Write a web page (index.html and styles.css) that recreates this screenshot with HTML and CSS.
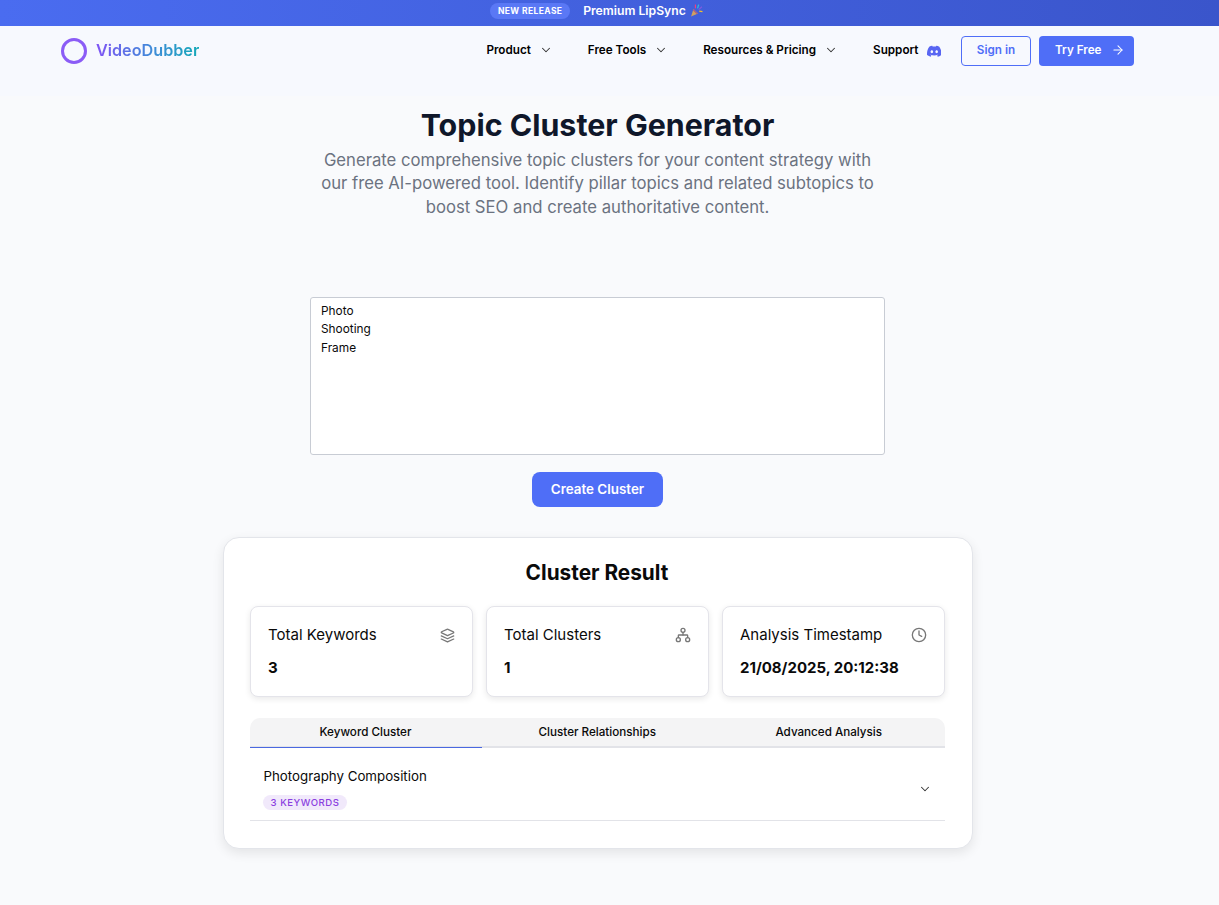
FILE: index.html
```html
<!DOCTYPE html>
<html lang="en">
<head>
<meta charset="utf-8">
<title>Topic Cluster Generator</title>
<link rel="stylesheet" href="styles.css">
</head>
<body>
<div class="topbar">
  <div class="topbar-inner">
    <span class="release">NEW RELEASE</span>
    <span class="promo">Premium LipSync</span>
    <svg class="popper" viewBox="0 0 12 12" aria-hidden="true">
      <path d="M1 11.5 3.2 4.6 7.4 8.8Z" fill="#d0a060"/>
      <path d="M3.2 4.6 7.4 8.8 6.2 9.3 2.8 5.9Z" fill="#a45a8c"/>
      <path d="M5 .5v3.5" stroke="#ef3f7f" stroke-width="1.1" fill="none"/>
      <path d="M8 .5 7 4" stroke="#2fc4d9" stroke-width="1.1" fill="none"/>
      <path d="M11 2.5 8 5.2" stroke="#7f5be0" stroke-width="1.1" fill="none"/>
      <path d="M11.5 7 8.5 6.6" stroke="#f2c02e" stroke-width="1.1" fill="none"/>
    </svg>
  </div>
</div>
<header class="nav">
  <a class="logo">
    <span class="logo-ring"></span>
    <span class="logo-text">VideoDubber</span>
  </a>
  <nav class="menu">
    <a class="menu-item">Product <svg class="chev" viewBox="0 0 24 24"><path d="m6 9 6 6 6-6"/></svg></a>
    <a class="menu-item">Free Tools <svg class="chev" viewBox="0 0 24 24"><path d="m6 9 6 6 6-6"/></svg></a>
    <a class="menu-item">Resources &amp; Pricing <svg class="chev" viewBox="0 0 24 24"><path d="m6 9 6 6 6-6"/></svg></a>
    <a class="menu-item">Support
      <svg class="discord" viewBox="0 0 24 24"><path d="M20.317 4.3698a19.7913 19.7913 0 00-4.8851-1.5152.0741.0741 0 00-.0785.0371c-.211.3753-.4447.8648-.6083 1.2495-1.8447-.2762-3.68-.2762-5.4868 0-.1636-.3933-.4058-.8742-.6177-1.2495a.077.077 0 00-.0785-.037 19.7363 19.7363 0 00-4.8852 1.515.0699.0699 0 00-.0321.0277C.5334 9.0458-.319 13.5799.0992 18.0578a.0824.0824 0 00.0312.0561c2.0528 1.5076 4.0413 2.4228 5.9929 3.0294a.0777.0777 0 00.0842-.0276c.4616-.6304.8731-1.2952 1.226-1.9942a.076.076 0 00-.0416-.1057c-.6528-.2476-1.2743-.5495-1.8722-.8923a.077.077 0 01-.0076-.1277c.1258-.0943.2517-.1923.3718-.2914a.0743.0743 0 01.0776-.0105c3.9278 1.7933 8.18 1.7933 12.0614 0a.0739.0739 0 01.0785.0095c.1202.099.246.1981.3728.2924a.077.077 0 01-.0066.1276 12.2986 12.2986 0 01-1.873.8914.0766.0766 0 00-.0407.1067c.3604.698.7719 1.3628 1.225 1.9932a.076.076 0 00.0842.0286c1.961-.6067 3.9495-1.5219 6.0023-3.0294a.077.077 0 00.0313-.0552c.5004-5.177-.8382-9.6739-3.5485-13.6604a.061.061 0 00-.0312-.0286zM8.02 15.3312c-1.1825 0-2.1569-1.0857-2.1569-2.419 0-1.3332.9555-2.4189 2.157-2.4189 1.2108 0 2.1757 1.0952 2.1568 2.419 0 1.3332-.9555 2.4189-2.1569 2.4189zm7.9748 0c-1.1825 0-2.1569-1.0857-2.1569-2.419 0-1.3332.9554-2.4189 2.1569-2.4189 1.2108 0 2.1757 1.0952 2.1568 2.419 0 1.3332-.946 2.4189-2.1568 2.4189z"/></svg>
    </a>
    <a class="btn-outline">Sign in</a>
    <a class="btn-solid">Try Free <svg class="arrow" viewBox="0 0 24 24"><path d="M5 12h14"/><path d="m12 5 7 7-7 7"/></svg></a>
  </nav>
</header>
<main class="main">
  <h1 class="title">Topic Cluster Generator</h1>
  <p class="subtitle">Generate comprehensive topic clusters for your content strategy with our free AI-powered tool. Identify pillar topics and related subtopics to boost SEO and create authoritative content.</p>
  <textarea class="input" spellcheck="false">Photo
Shooting
Frame</textarea>
  <button class="create">Create Cluster</button>
  <section class="result">
    <h2 class="result-title">Cluster Result</h2>
    <div class="stats">
      <div class="stat">
        <div class="stat-head"><span>Total Keywords</span>
          <svg class="stat-icon" viewBox="0 0 24 24"><path d="M12.83 2.18a2 2 0 0 0-1.66 0L2.6 6.08a1 1 0 0 0 0 1.83l8.58 3.91a2 2 0 0 0 1.66 0l8.58-3.9a1 1 0 0 0 0-1.83Z"/><path d="m22 17.65-9.17 4.16a2 2 0 0 1-1.66 0L2 17.65"/><path d="m22 12.65-9.17 4.16a2 2 0 0 1-1.66 0L2 12.65"/></svg>
        </div>
        <div class="stat-value">3</div>
      </div>
      <div class="stat">
        <div class="stat-head"><span>Total Clusters</span>
          <svg class="stat-icon large" viewBox="0 0 24 24"><rect x="16" y="16" width="6" height="6" rx="3"/><rect x="2" y="16" width="6" height="6" rx="3"/><rect x="9" y="2" width="6" height="6" rx="3"/><path d="M5 16v-3a1 1 0 0 1 1-1h12a1 1 0 0 1 1 1v3"/><path d="M12 12V8"/></svg>
        </div>
        <div class="stat-value">1</div>
      </div>
      <div class="stat">
        <div class="stat-head"><span>Analysis Timestamp</span>
          <svg class="stat-icon large" viewBox="0 0 24 24"><circle cx="12" cy="12" r="10"/><path d="M12 6v6l4 2"/></svg>
        </div>
        <div class="stat-value">21/08/2025, 20:12:38</div>
      </div>
    </div>
    <div class="tabs">
      <div class="tab active">Keyword Cluster</div>
      <div class="tab">Cluster Relationships</div>
      <div class="tab">Advanced Analysis</div>
    </div>
    <div class="row">
      <div class="row-main">
        <div class="row-title">Photography Composition</div>
        <span class="badge">3 KEYWORDS</span>
      </div>
      <svg class="row-chev" viewBox="0 0 24 24"><path d="m6 9 6 6 6-6"/></svg>
    </div>
  </section>
</main>
</body>
</html>
```

FILE: styles.css
```css
* { box-sizing: border-box; }
html, body { margin: 0; padding: 0; }
body {
  font-family: Inter, "Liberation Sans", sans-serif;
  background: #f9fafc;
  color: #0a0a0a;
  min-height: 905px;
}
.topbar {
  height: 26px;
  background: linear-gradient(90deg, #4a6cf0 0%, #3a55cb 100%);
  padding-right: 26px;
}
.topbar-inner {
  height: 21px;
  display: flex;
  align-items: center;
  justify-content: center;
  color: #fff;
}
.release {
  background: #5a78f5;
  border-radius: 9px;
  height: 16px;
  width: 80px;
  display: flex;
  align-items: center;
  justify-content: center;
  font-size: 8.5px;
  font-weight: 700;
  letter-spacing: .4px;
}
.promo { margin-left: 13px; font-size: 12.2px; font-weight: 600; }
.popper { width: 13px; height: 13px; margin-left: 4px; }
.nav {
  height: 70px;
  background: #f7f9fe;
  display: flex;
  justify-content: space-between;
  padding: 10px 85px 0 61px;
}
.logo { display: flex; align-items: center; height: 30px; }
.logo-ring {
  width: 26px;
  height: 26px;
  border-radius: 50%;
  border: 3px solid #8b5cf6;
}
.logo-text {
  margin-left: 9px;
  margin-bottom: 2px;
  font-size: 16.2px;
  font-weight: 600;
  background: linear-gradient(90deg, #8054f5 0%, #3f8cd8 55%, #14a9b8 100%);
  -webkit-background-clip: text;
  background-clip: text;
  color: transparent;
}
.menu {
  display: flex;
  align-items: center;
  gap: 35px;
  height: 30px;
  font-size: 11.7px;
  font-weight: 600;
  color: #000;
}
.menu-item { display: flex; align-items: center; padding-bottom: 2px; }
.chev {
  width: 14px;
  height: 14px;
  margin-left: 8px;
  fill: none;
  stroke: #333;
  stroke-width: 1.8;
  stroke-linecap: round;
  stroke-linejoin: round;
}
.discord { width: 14.5px; height: 14.5px; margin-left: 8px; margin-top: 2px; fill: #5865f2; }
.btn-outline {
  margin-left: -15px;
  width: 70px;
  height: 30px;
  padding-bottom: 2px;
  border: 1px solid #4f6ef7;
  border-radius: 4px;
  color: #4f6ef7;
  display: flex;
  align-items: center;
  justify-content: center;
}
.btn-solid {
  margin-left: -27px;
  width: 95px;
  height: 30px;
  padding: 0 0 2px 16px;
  background: #4f6ef7;
  border-radius: 4px;
  color: #fff;
  display: flex;
  align-items: center;
}
.arrow {
  width: 14px;
  height: 14px;
  margin-left: 9px;
  fill: none;
  stroke: #fff;
  stroke-width: 1.8;
  stroke-linecap: round;
  stroke-linejoin: round;
}
.main {
  width: 1195px;
  display: flex;
  flex-direction: column;
  align-items: center;
}
.title { margin: 10px 0 0; font-size: 30.4px; line-height: 39px; font-weight: 700; color: #0f172a; }
.subtitle {
  margin: 3.5px 0 0;
  width: 560px;
  text-align: center;
  font-size: 16.7px;
  line-height: 23.5px;
  color: #6b7280;
}
.input {
  display: block;
  margin-top: 78px;
  width: 575px;
  height: 158px;
  padding: 4px 10px;
  border: 1px solid #c8ccd4;
  border-radius: 3px;
  background: #fff;
  font-family: Inter, "Liberation Sans", sans-serif;
  font-size: 11.85px;
  line-height: 18.4px;
  color: #0a0a0a;
  resize: none;
}
.create {
  margin-top: 17px;
  width: 131px;
  height: 35px;
  padding: 0 0 2px;
  border: 0;
  border-radius: 8px;
  background: #4f6ef7;
  color: #fff;
  font-family: inherit;
  font-size: 13.4px;
  font-weight: 600;
}
.result {
  margin-top: 30px;
  width: 750px;
  height: 312px;
  padding: 0 27px 0 26px;
  background: #fff;
  border: 1px solid #e3e5ea;
  border-radius: 16px;
  box-shadow: 0 4px 12px rgba(0, 0, 0, .09);
}
.result-title {
  margin: 21px 0 0;
  text-align: center;
  font-size: 20.8px;
  line-height: 27px;
  font-weight: 700;
}
.stats {
  margin-top: 20px;
  display: grid;
  grid-template-columns: repeat(3, 223px);
  gap: 13px;
}
.stat {
  height: 91px;
  padding: 18px 17px 18px 17.5px;
  background: #fff;
  border: 1px solid #e4e4ea;
  border-radius: 8px;
  box-shadow: 0 2px 6px rgba(0, 0, 0, .09);
}
.stat-head {
  display: flex;
  justify-content: space-between;
  align-items: center;
  font-size: 15px;
  line-height: 20px;
  color: #0a0a0a;
}
.stat-icon {
  width: 15px;
  height: 15px;
  fill: none;
  stroke: #777;
  stroke-width: 2;
  stroke-linecap: round;
  stroke-linejoin: round;
}
.stat-icon.large { width: 16px; height: 16px; }
.stat-value { margin-top: 13px; font-size: 15px; line-height: 20px; font-weight: 700; }
.tabs {
  margin-top: 21px;
  height: 30px;
  display: grid;
  grid-template-columns: 232px 1fr 1fr;
  background: #f4f4f5;
  border-radius: 10px 10px 0 0;
  border-bottom: 2px solid #e2e3e8;
}
.tab {
  height: 29px;
  padding-bottom: 1px;
  display: flex;
  align-items: center;
  justify-content: center;
  font-size: 11.65px;
  font-weight: 500;
  color: #0a0a0a;
}
.tab.active { box-shadow: 0 1px 0 #4a68e0; }
.row {
  height: 73px;
  padding: 19px 14px 10px;
  display: flex;
  align-items: center;
  justify-content: space-between;
  border-bottom: 1px solid #e2e3e8;
}
.row-main { display: flex; flex-direction: column; align-items: flex-start; }
.row-title { font-size: 13.3px; line-height: 18px; color: #0a0a0a; }
.badge {
  margin: 10px 0 0 -0.5px;
  height: 15px;
  width: 84px;
  border-radius: 8px;
  background: #f1e9fb;
  color: #8b3fe0;
  font-size: 9.6px;
  letter-spacing: .5px;
  font-weight: 500;
  display: flex;
  align-items: center;
  justify-content: center;
}
.row-chev {
  width: 14px;
  height: 14px;
  margin-right: -1px;
  fill: none;
  stroke: #333;
  stroke-width: 1.8;
  stroke-linecap: round;
  stroke-linejoin: round;
}
```
